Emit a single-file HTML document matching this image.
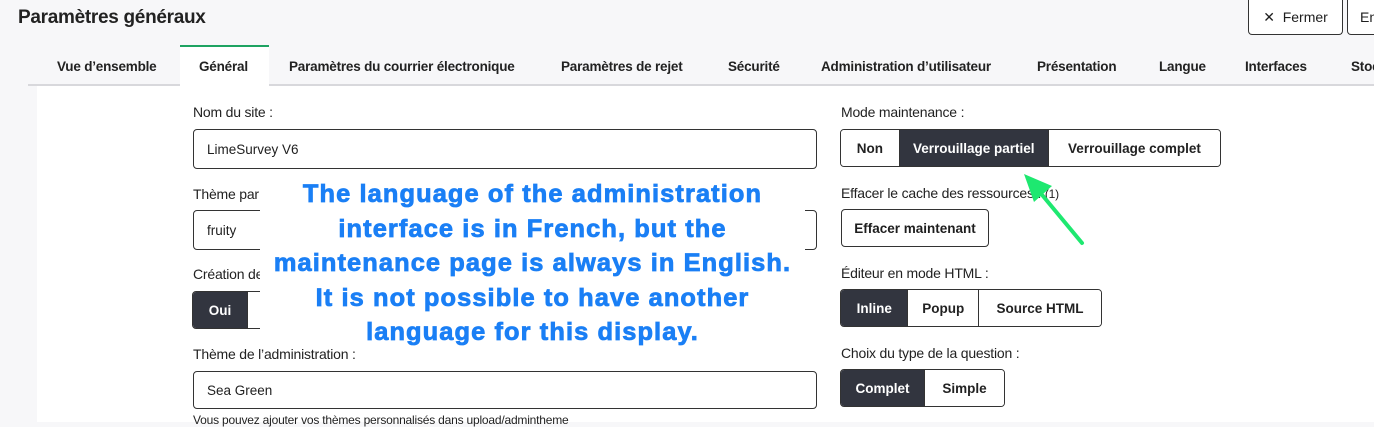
<!DOCTYPE html>
<html><head><meta charset="utf-8"><style>
*{box-sizing:border-box;margin:0;padding:0}
body{width:1374px;height:422px;overflow:hidden;background:#f7f7f9;font-family:"Liberation Sans",sans-serif;color:#1e1e1e;position:relative}
.a{position:absolute}
h1{position:absolute;left:18px;top:7px;font-size:19px;font-weight:bold;color:#222;letter-spacing:-0.3px}
.btn{position:absolute;border:1px solid #333;border-radius:4px;background:#fff;font-size:14px;display:flex;align-items:center;justify-content:center}
.tab{position:absolute;top:59px;font-size:13.5px;font-weight:bold;color:#222;letter-spacing:-0.2px}
.content{position:absolute;left:37px;top:86px;right:0;bottom:0;background:#fff}
.line{position:absolute;left:28px;top:84px;right:0;height:2px;background:#d8d8dc}
.lbl{position:absolute;font-size:14px;color:#222;letter-spacing:-0.2px}
.inp{position:absolute;border:1px solid #333;border-radius:4px;background:#fff;font-size:13.5px;padding-left:13px;display:flex;align-items:center}
.grp{position:absolute;display:flex;border:1px solid #333;border-radius:4px;overflow:hidden;height:38px;font-size:13.5px;font-weight:bold}
.grp div{display:flex;align-items:center;justify-content:center;border-left:1px solid #333;background:#fff;color:#222}
.grp div:first-child{border-left:none}
.grp .on{background:#32353f;color:#fff}
.ov{position:absolute;left:260px;top:176px;width:545px;height:170px;background:#fff;color:#1a7ff5;font-weight:bold;font-size:25.4px;line-height:34.5px;padding-top:1px;text-align:center;font-family:"Liberation Sans",sans-serif;letter-spacing:1.1px;-webkit-text-stroke:0.8px #1a7ff5;white-space:nowrap}
</style></head><body>
<h1>Paramètres généraux</h1>
<div class="btn" style="left:1248px;top:0;width:95px;height:35px;border-top:none;border-radius:0 0 4px 4px">✕&nbsp; Fermer</div>
<div class="btn" style="left:1347px;top:0;width:40px;height:35px;border-top:none;border-radius:0 0 4px 4px;justify-content:flex-start;padding-left:12px">En</div>
<div class="line"></div>
<div class="a" style="left:180px;top:45px;width:89px;height:41px;background:#fff;border-top:2px solid #1ea362"></div>
<div class="tab" style="left:57px">Vue d’ensemble</div>
<div class="tab" style="left:199px">Général</div>
<div class="tab" style="left:289px">Paramètres du courrier électronique</div>
<div class="tab" style="left:561px">Paramètres de rejet</div>
<div class="tab" style="left:728px">Sécurité</div>
<div class="tab" style="left:821px">Administration d’utilisateur</div>
<div class="tab" style="left:1037px">Présentation</div>
<div class="tab" style="left:1159px">Langue</div>
<div class="tab" style="left:1245px">Interfaces</div>
<div class="tab" style="left:1351px">Stock</div>
<div class="content"></div>
<div class="lbl" style="left:193px;top:104px">Nom du site :</div>
<div class="inp" style="left:193px;top:129px;width:624px;height:40px">LimeSurvey V6</div>
<div class="lbl" style="left:193px;top:186px">Thème par défaut :</div>
<div class="inp" style="left:193px;top:210px;width:624px;height:40px">fruity</div>
<div class="lbl" style="left:193px;top:266px">Création de</div>
<div class="grp" style="left:192px;top:291px;width:120px"><div class="on" style="width:55px">Oui</div><div style="width:65px">Non</div></div>
<div class="lbl" style="left:193px;top:346px">Thème de l’administration :</div>
<div class="inp" style="left:193px;top:371px;width:624px;height:38px">Sea Green</div>
<div class="lbl" style="left:193px;top:413px;font-size:12px">Vous pouvez ajouter vos thèmes personnalisés dans upload/admintheme</div>
<div class="ov">The language of the administration<br>interface is in French, but the<br>maintenance page is always in English.<br>It is not possible to have another<br>language for this display.</div>
<div class="lbl" style="left:841px;top:104px">Mode maintenance :</div>
<div class="grp" style="left:840px;top:129px;width:381px"><div style="width:58px">Non</div><div class="on" style="width:150px">Verrouillage partiel</div><div style="width:173px">Verrouillage complet</div></div>
<div class="lbl" style="left:841px;top:185px">Effacer le cache des ressources : <span style="font-size:12px">(1)</span></div>
<div class="btn" style="left:841px;top:209px;width:148px;height:38px;font-weight:bold;font-size:13.5px">Effacer maintenant</div>
<div class="lbl" style="left:841px;top:265px">Éditeur en mode HTML :</div>
<div class="grp" style="left:840px;top:289px;width:262px"><div class="on" style="width:67px">Inline</div><div style="width:71px">Popup</div><div style="width:124px">Source HTML</div></div>
<div class="lbl" style="left:841px;top:345px">Choix du type de la question :</div>
<div class="grp" style="left:840px;top:369px;width:165px"><div class="on" style="width:84px">Complet</div><div style="width:81px">Simple</div></div>
<svg class="a" style="left:1010px;top:160px" width="90" height="100"><line x1="72" y1="83" x2="28" y2="30" stroke="#1ee870" stroke-width="4" stroke-linecap="round"/><polygon points="14,14 42,26 24,42" fill="#1ee870"/></svg>
</body></html>
